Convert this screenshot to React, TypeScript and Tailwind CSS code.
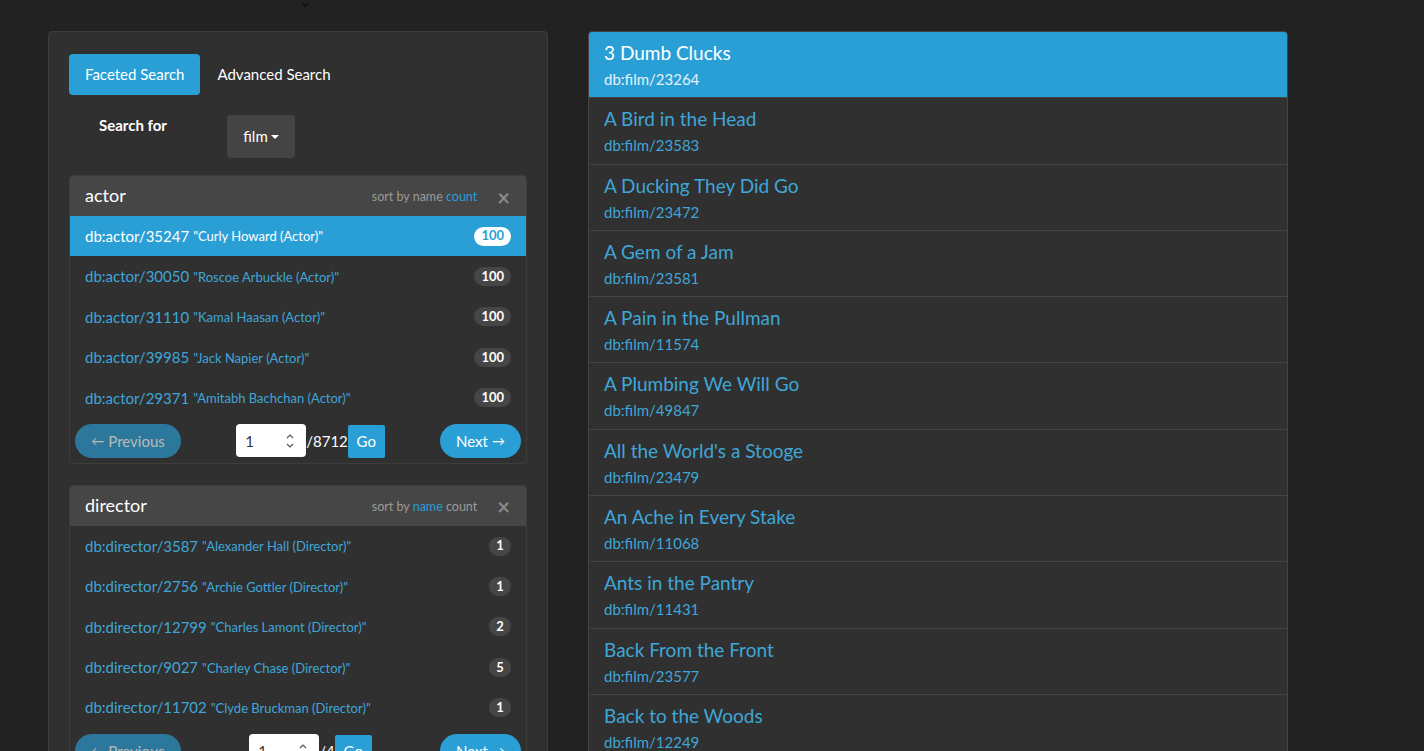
import React from "react";

const actors = [
  ["db:actor/35247", "Curly Howard (Actor)", "100"],
  ["db:actor/30050", "Roscoe Arbuckle (Actor)", "100"],
  ["db:actor/31110", "Kamal Haasan (Actor)", "100"],
  ["db:actor/39985", "Jack Napier (Actor)", "100"],
  ["db:actor/29371", "Amitabh Bachchan (Actor)", "100"],
];
const directors = [
  ["db:director/3587", "Alexander Hall (Director)", "1"],
  ["db:director/2756", "Archie Gottler (Director)", "1"],
  ["db:director/12799", "Charles Lamont (Director)", "2"],
  ["db:director/9027", "Charley Chase (Director)", "5"],
  ["db:director/11702", "Clyde Bruckman (Director)", "1"],
];
const films = [
  ["3 Dumb Clucks", "23264"],
  ["A Bird in the Head", "23583"],
  ["A Ducking They Did Go", "23472"],
  ["A Gem of a Jam", "23581"],
  ["A Pain in the Pullman", "11574"],
  ["A Plumbing We Will Go", "49847"],
  ["All the World's a Stooge", "23479"],
  ["An Ache in Every Stake", "11068"],
  ["Ants in the Pantry", "11431"],
  ["Back From the Front", "23577"],
  ["Back to the Woods", "12249"],
  ["Beer and Pretzels", "23580"],
];

function Spinner() {
  return (
    <svg width="8" height="16" viewBox="0 0 8 16" fill="none" stroke="#555" strokeWidth="1.2">
      <path d="M1 5 L4 2 L7 5" />
      <path d="M1 11 L4 14 L7 11" />
    </svg>
  );
}

function Facet({
  title,
  rows,
  total,
  sortActive,
  activeIndex,
}: {
  title: string;
  rows: string[][];
  total: string;
  sortActive: "name" | "count";
  activeIndex: number;
}) {
  return (
    <div className="rounded-[4px] border border-[#3d3d3d] bg-[#303030] overflow-hidden">
      <div className="flex h-[40px] items-center bg-[#464646] pl-[15px] pr-[16px]">
        <span className="mt-[-1px] text-[18px] text-white">{title}</span>
        <span className="ml-auto mt-[3px] text-[12.5px] text-[#9a9a9a]">
          sort by{" "}
          <span className={sortActive === "name" ? "text-[#2a9fd6]" : ""}>name</span>{" "}
          <span className={sortActive === "count" ? "text-[#2a9fd6]" : ""}>count</span>
        </span>
        <span className="ml-[20px] mt-[3px] text-[22px] leading-none font-bold text-[#8a8a8a]">×</span>
      </div>
      {rows.map((r, i) => {
        const active = i === activeIndex;
        return (
          <div
            key={r[0]}
            className={
              "flex h-[40.4px] items-center pl-[15px] pr-[15px] " +
              (active ? "bg-[#2a9fd6] text-white" : "text-[#3fa6d8]")
            }
          >
            <span className="text-[15px]">{r[0]}</span>
            <span className="ml-[4px] mt-[2px] text-[13px]">"{r[1]}"</span>
            <span
              className={
                "ml-auto flex h-[19px] min-w-[22px] items-center justify-center rounded-full px-[7px] text-[13px] font-bold " +
                (active ? "bg-white text-[#2a9fd6]" : "bg-[#464646] text-white")
              }
            >
              {r[2]}
            </span>
          </div>
        );
      })}
      <div className="flex items-center px-[5px] pt-[6px] pb-[5px]">
        <div className="flex h-[34px] w-[106px] items-center justify-center rounded-full bg-[#2a9fd6] opacity-65 text-[15px] text-white">
          <span className="text-[13px] mr-[4px] mt-[2px]">←</span>Previous
        </div>
        <div className="ml-auto flex items-center">
          <div className="flex h-[33px] w-[70px] items-center justify-between rounded-[4px] bg-white pl-[9px] pr-[12px] text-[15px] text-[#333]">
            <span>1</span>
            <Spinner />
          </div>
          <span className="text-[15px] text-white">/{total}</span>
          <div className="flex h-[33px] w-[37px] items-center justify-center rounded-[2px] bg-[#2a9fd6] text-[15px] text-white mt-[1px]">
            Go
          </div>
        </div>
        <div className="ml-auto flex h-[34px] w-[81px] items-center justify-center rounded-full bg-[#2a9fd6] text-[15px] text-white">
          Next<span className="ml-[4px] text-[13px] mt-[2px]">→</span>
        </div>
      </div>
    </div>
  );
}

export default function App() {
  return (
    <div
      className="min-h-screen bg-[#222222]"
      style={{ fontFamily: "Lato, 'Open Sans', 'Liberation Sans', sans-serif" }}
    >
      <div className="flex h-[31px] items-start pl-[299px]">
        <svg width="12" height="8" viewBox="0 0 12 8" className="mt-[1px]">
          <path d="M3 2 L6 5 L9 2" stroke="#111" strokeWidth="1.6" fill="none" />
        </svg>
      </div>
      <div className="flex items-start pl-[48px]">
        <div className="w-[500px] rounded-[4px] border border-[#3d3d3d] bg-[#303030] px-[20px] pt-[22px] pb-[20px]">
          <div className="flex items-center">
            <div className="flex h-[41px] items-center rounded-[4px] bg-[#2a9fd6] px-[16px] text-[15px] text-white">
              Faceted Search
            </div>
            <div className="flex h-[41px] items-center px-[17px] text-[15px] text-white">Advanced Search</div>
          </div>
          <div className="mt-[20px] flex items-start">
            <div className="w-[158px] pl-[30px] text-[15px] font-bold text-white leading-[21px]">
              Search for
            </div>
            <div className="flex h-[43px] w-[68px] items-center justify-center rounded-[4px] bg-[#444444] text-[15px] text-white">
              film
              <svg width="8" height="5" viewBox="0 0 8 5" className="ml-[3px] mt-[1px]">
                <path d="M0 0 L8 0 L4 4 Z" fill="#fff" />
              </svg>
            </div>
          </div>
          <div className="mt-[17px] flex flex-col gap-[21px]">
            <Facet title="actor" rows={actors} total="8712" sortActive="count" activeIndex={0} />
            <Facet title="director" rows={directors} total="4" sortActive="name" activeIndex={-1} />
          </div>
        </div>
        <div className="ml-[40px] w-[700px] overflow-hidden rounded-[4px] border border-[#444444] bg-[#303030] divide-y divide-[#444444]">
          {films.map((f, i) => (
            <div
              key={f[1]}
              className={
                "pl-[15px] pr-[15px] pt-[9px] pb-[7.3px] " +
                (i === 0 ? "bg-[#2a9fd6] text-white" : "text-[#3fa6d8]")
              }
            >
              <div className="text-[19px] leading-[24px]">{f[0]}</div>
              <div className={"mt-[3px] text-[15px] leading-[22px] " + (i === 0 ? "text-[#e4f2fa]" : "")}>
                db:film/{f[1]}
              </div>
            </div>
          ))}
        </div>
      </div>
    </div>
  );
}
